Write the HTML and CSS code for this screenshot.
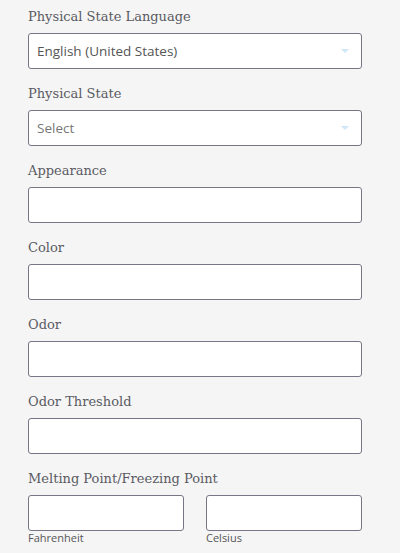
FILE: index.html
```html
<!DOCTYPE html>
<html>
<head>
<meta charset="utf-8">
<link rel="stylesheet" href="styles.css">
</head>
<body>
<form class="form">
  <div class="field">
    <label class="label">Physical State Language</label>
    <div class="box select"><span class="value">English (United States)</span><span class="arrow"></span></div>
  </div>
  <div class="field">
    <label class="label">Physical State</label>
    <div class="box select"><span class="value placeholder">Select</span><span class="arrow"></span></div>
  </div>
  <div class="field">
    <label class="label">Appearance</label>
    <div class="box"></div>
  </div>
  <div class="field">
    <label class="label">Color</label>
    <div class="box"></div>
  </div>
  <div class="field">
    <label class="label">Odor</label>
    <div class="box"></div>
  </div>
  <div class="field">
    <label class="label">Odor Threshold</label>
    <div class="box"></div>
  </div>
  <div class="field">
    <label class="label">Melting Point/Freezing Point</label>
    <div class="pair">
      <div class="unit"><div class="box"></div><span class="sub">Fahrenheit</span></div>
      <div class="unit"><div class="box"></div><span class="sub">Celsius</span></div>
    </div>
  </div>
</form>
</body>
</html>
```
FILE: styles.css
```css
html, body {
  margin: 0;
  padding: 0;
  background: #f5f5f5;
}
.form {
  width: 334px;
  margin-left: 28px;
  padding-top: 7px;
  display: flex;
  flex-direction: column;
  gap: 15px;
}
.field {
  display: flex;
  flex-direction: column;
}
.label {
  font-family: "DejaVu Serif", serif;
  font-size: 13px;
  color: #5a5a62;
  line-height: 20px;
  height: 20px;
  margin-bottom: 6px;
}
.box {
  box-sizing: border-box;
  height: 36px;
  background: #fff;
  border: 1px solid #767686;
  border-radius: 3px;
}
.select {
  display: flex;
  align-items: center;
  justify-content: space-between;
  padding: 0 12px 0 8px;
}
.value {
  font-family: "Open Sans", sans-serif;
  font-size: 13.5px;
  color: #555;
}
.placeholder {
  color: #777;
}
.arrow {
  width: 0;
  height: 0;
  border-left: 4px solid transparent;
  border-right: 4px solid transparent;
  border-top: 4px solid #cfe7f6;
}
.pair {
  display: grid;
  grid-template-columns: 156px 156px;
  column-gap: 22px;
}
.unit {
  display: flex;
  flex-direction: column;
}
.sub {
  font-family: "Open Sans", sans-serif;
  font-size: 11px;
  color: #555;
  line-height: 14px;
}
```
